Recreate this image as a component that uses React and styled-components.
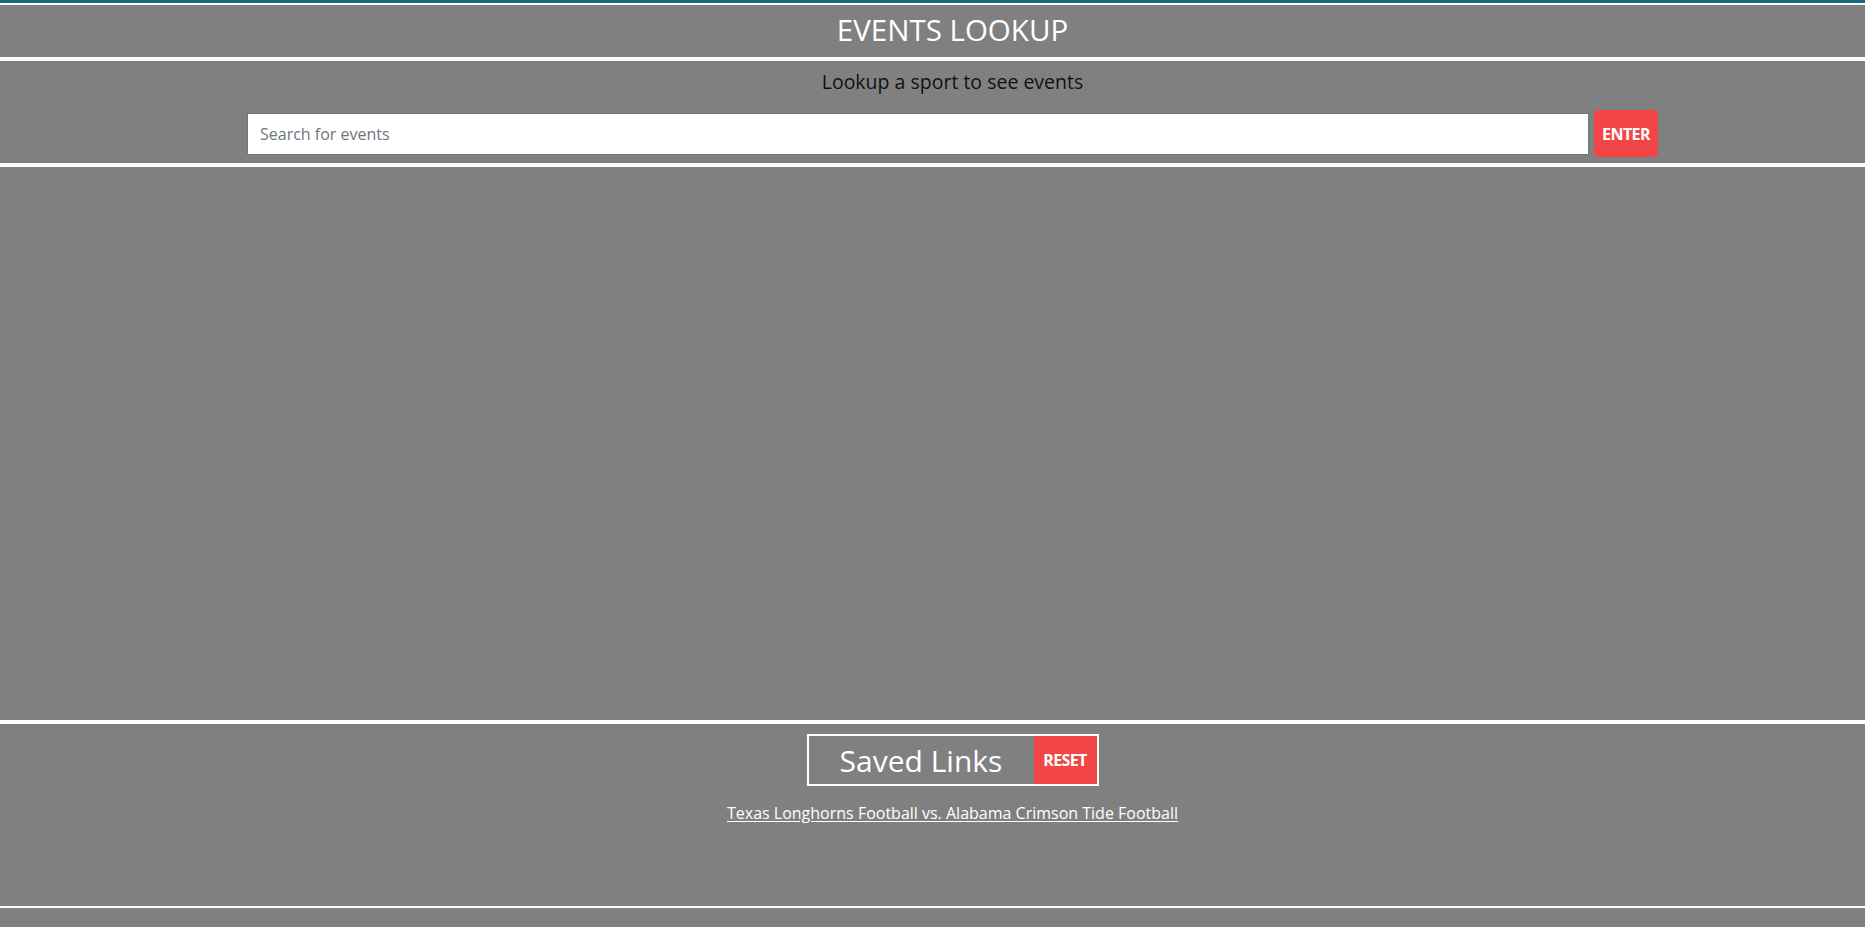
import styled, { createGlobalStyle } from 'styled-components';

const GlobalStyle = createGlobalStyle`
  html, body {
    margin: 0;
    padding: 0;
    background: #808080;
    font-family: "Open Sans", "Noto Sans", sans-serif;
  }
  * {
    box-sizing: border-box;
  }
`;

const TopStrip = styled.div`
  height: 5px;
  border-top: 3px solid #0f6a7b;
  background: #fff;
`;

const Header = styled.header`
  height: 56px;
  display: flex;
  align-items: center;
  justify-content: center;
  padding: 0 0 4px 40px;
  border-bottom: 4px solid #fff;
`;

const Title = styled.h1`
  margin: 0;
  font-size: 29.5px;
  font-weight: 400;
  color: #fff;
  letter-spacing: 0;
`;

const SearchSection = styled.section`
  height: 106px;
  display: flex;
  flex-direction: column;
  align-items: center;
  padding: 8px 0 0 40px;
  border-bottom: 4px solid #fff;
`;

const Subtitle = styled.p`
  margin: 0;
  font-size: 19.5px;
  line-height: 26px;
  color: #111;
`;

const SearchForm = styled.form`
  width: 1411px;
  margin-top: 15px;
  display: flex;
  align-items: center;
  gap: 5px;
`;

const SearchInput = styled.input`
  flex: 1;
  height: 42px;
  padding: 0 12px;
  border: 1px solid #6c757d;
  background: #fff;
  font-family: inherit;
  font-size: 16px;
  color: #333;
  outline: none;

  &::placeholder {
    color: #6c757d;
  }
`;

const RedButton = styled.button`
  width: ${({ w }) => w || 64}px;
  height: ${({ h }) => h || 47}px;
  border: none;
  border-radius: 4px;
  background: #f24646;
  color: #fff;
  font-family: inherit;
  font-size: 16px;
  font-weight: 700;
  letter-spacing: -0.6px;
  cursor: pointer;
  padding: 0;
`;

const ResultsArea = styled.main`
  height: 557px;
  border-bottom: 4px solid #fff;
`;

const SavedSection = styled.section`
  height: 184px;
  display: flex;
  flex-direction: column;
  align-items: center;
  padding: 10px 0 0 40px;
  border-bottom: 2px solid #fff;
`;

const SavedBox = styled.div`
  width: 292px;
  height: 52px;
  display: flex;
  align-items: center;
  border: 2px solid #fff;
`;

const SavedTitle = styled.h2`
  flex: 1;
  margin: 0;
  text-align: center;
  font-size: 30px;
  font-weight: 400;
  color: #fff;
`;

const SavedList = styled.ul`
  list-style: none;
  margin: 16px 0 0;
  padding: 0;
  text-align: center;
`;

const SavedLink = styled.a`
  color: #fff;
  font-size: 16px;
  text-decoration: underline;
  text-underline-offset: 2px;
`;

const savedLinks = ['Texas Longhorns Football vs. Alabama Crimson Tide Football'];

export default function App() {
  return (
    <>
      <GlobalStyle />
      <TopStrip />
      <Header>
        <Title>EVENTS LOOKUP</Title>
      </Header>
      <SearchSection>
        <Subtitle>Lookup a sport to see events</Subtitle>
        <SearchForm onSubmit={(e) => e.preventDefault()}>
          <SearchInput type="text" placeholder="Search for events" />
          <RedButton type="submit">ENTER</RedButton>
        </SearchForm>
      </SearchSection>
      <ResultsArea />
      <SavedSection>
        <SavedBox>
          <SavedTitle>Saved Links</SavedTitle>
          <RedButton w={63} h={48} type="button">RESET</RedButton>
        </SavedBox>
        <SavedList>
          {savedLinks.map((link, index) => (
            <li key={index}>
              <SavedLink href="#">{link}</SavedLink>
            </li>
          ))}
        </SavedList>
      </SavedSection>
    </>
  );
}
